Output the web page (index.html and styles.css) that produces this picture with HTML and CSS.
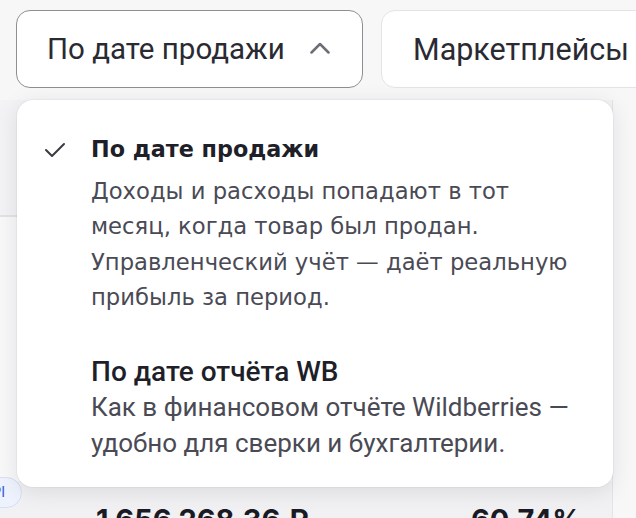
FILE: index.html
```html
<!DOCTYPE html>
<html lang="ru">
<head>
    <meta charset="UTF-8">
    <meta name="viewport" content="width=device-width, initial-scale=1.0">
    <title>Отчёт</title>
    <link rel="stylesheet" href="styles.css">
</head>
<body>
    <div class="filters">
        <div class="select-wrap">
            <div class="select-button open">
                <span>По дате продажи</span>
                <svg class="chevron" width="20" height="12" viewBox="0 0 20 12"><path d="M1.5 10.5 L10 2 L18.5 10.5" fill="none" stroke="#6e6e76" stroke-width="2.5" stroke-linecap="round" stroke-linejoin="round"/></svg>
            </div>

            <!-- dropdown menu -->
            <div class="select-menu">
                <div class="menu-item selected">
                    <svg class="check" width="22" height="16" viewBox="0 0 22 16"><path d="M2 8 L8 14 L20 2" fill="none" stroke="#3a3a42" stroke-width="2" stroke-linecap="round" stroke-linejoin="round"/></svg>
                    <div class="item-title">По дате продажи</div>
                    <div class="item-desc">Доходы и расходы попадают в тот<br>месяц, когда товар был продан.<br>Управленческий учёт — даёт реальную<br>прибыль за период.</div>
                </div>
                <div class="menu-item alt">
                    <div class="item-title">По дате отчёта WB</div>
                    <div class="item-desc">Как в финансовом отчёте Wildberries —<br>удобно для сверки и бухгалтерии.</div>
                </div>
            </div>
        </div>
        <div class="select-button">
            <span>Маркетплейсы</span>
        </div>
    </div>

    <div class="table-card">
        <div class="table-head"></div>
        <div class="table-body"></div>
        <div class="table-row">
            <span class="badge">РІ</span>
            <span class="amount">1 656 268,36 ₽</span>
            <span class="percent">60,74%</span>
        </div>
    </div>
</body>
</html>
```

FILE: styles.css
```css
body {
    margin: 0;
    background-color: #f7f7f8;
    font-family: "Roboto", "Liberation Sans", sans-serif;
    color: #1c1c24;
    width: 636px;
    height: 518px;
    overflow: hidden;
}
.filters {
    display: flex;
    gap: 18px;
    padding: 10px 0 0 16px;
    white-space: nowrap;
}
.select-wrap {
    position: relative;
}
.select-button {
    box-sizing: border-box;
    height: 78px;
    display: flex;
    align-items: center;
    gap: 25px;
    padding: 0 32px 0 31px;
    background-color: white;
    border: 1.5px solid #e4e4e7;
    border-radius: 14px;
    font-size: 30.5px;
    color: #2a2a33;
}
.select-button.open {
    width: 347px;
    border-color: #8e8e95;
    padding-left: 30px;
    font-size: 29.5px;
}
.chevron {
    margin-top: -3px;
}
.select-menu {
    position: absolute;
    top: 90px;
    left: 1px;
    width: 596px;
    height: 387px;
    box-sizing: border-box;
    background-color: white;
    border-radius: 16px;
    box-shadow: 0 4px 22px rgba(20, 20, 40, 0.10), 0 0 0 1px rgba(0, 0, 0, 0.03);
    padding: 34px 0 0 74px;
    z-index: 2;
}
.menu-item {
    position: relative;
}
.check {
    position: absolute;
    left: -47px;
    top: 8px;
}
.item-title {
    font-family: "DejaVu Sans", sans-serif;
    font-weight: 700;
    font-size: 22.3px;
    line-height: 30px;
    color: #1f1f29;
}
.item-desc {
    font-family: "DejaVu Sans", sans-serif;
    font-size: 22.7px;
    line-height: 35.3px;
    color: #4a4a55;
    margin-top: 10px;
}
.menu-item.alt {
    margin-top: 42px;
}
.menu-item.alt .item-title {
    font-family: "Roboto", sans-serif;
    font-weight: 500;
    font-size: 28px;
}
.menu-item.alt .item-desc {
    font-family: "Roboto", sans-serif;
    font-size: 26px;
    line-height: 35.5px;
    margin-top: 3px;
}
.table-card {
    margin: 12px 23px 0 0;
    background-color: white;
    border-right: 1.5px solid #e4e4e7;
}
.table-head {
    height: 115px;
    background-color: #f3f3f5;
    border-bottom: 2px solid #e2e2e6;
}
.table-body {
    height: 264px;
    background-color: #f8f8f9;
}
.table-row {
    position: relative;
    height: 60px;
    background-color: #f1f1f3;
}
.badge {
    position: absolute;
    left: -22px;
    top: -4px;
    box-sizing: border-box;
    width: 44px;
    height: 31px;
    padding-right: 16px;
    border: 1.5px solid #d6def5;
    border-radius: 16px;
    background-color: #eef2fd;
    color: #3a5bd9;
    font-size: 14px;
    line-height: 28px;
    text-align: right;
}
.amount, .percent {
    position: absolute;
    top: 21px;
    font-family: "Inter", sans-serif;
    font-weight: 700;
    font-size: 29px;
    color: #1a1a24;
}
.amount {
    left: 96px;
}
.percent {
    left: 471px;
}
```
